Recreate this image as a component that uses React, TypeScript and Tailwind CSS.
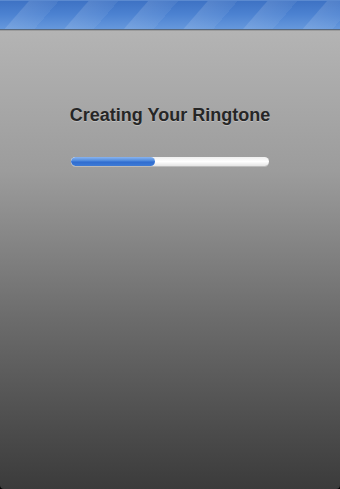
export default function App() {
  return (
    <div className="w-[340px] h-[489px] bg-black overflow-hidden">
      <div className="w-full h-full flex flex-col rounded-b-[4px] overflow-hidden bg-[linear-gradient(to_bottom,#b9b9b9_0%,#9c9c9c_35%,#6c6c6c_65%,#3b3b3b_100%)]">
        {/* striped top bar */}
        <div className="relative h-[29px] shrink-0 bg-[linear-gradient(to_bottom,#3d71c3_0%,#4c82d1_50%,#6698dc_100%)] overflow-hidden">
          <div className="absolute inset-0 bg-[repeating-linear-gradient(131deg,rgba(255,255,255,0)_0px,rgba(255,255,255,0)_22px,rgba(255,255,255,0.12)_23px,rgba(255,255,255,0.06)_45px)]" />
          <div className="absolute top-0 left-0 right-0 h-[1px] bg-[#5b8ad0]" />
        </div>
        <div className="h-[1px] shrink-0 bg-[#56687e]" />
        <div className="h-[1px] shrink-0 bg-[#9c9c9c]" />

        <div className="flex flex-col items-center pt-[73px]">
          <h1 className="font-['Liberation_Sans',Arial,sans-serif] font-bold text-[18px] leading-[22px] text-[#262626] [text-shadow:0_1px_0_rgba(255,255,255,0.3)]">
            Creating Your Ringtone
          </h1>
          <div className="mt-[31px] w-[198px] h-[9px] rounded-full bg-[linear-gradient(to_bottom,#eeeeee,#ffffff_50%,#e4e4e4)] overflow-hidden shadow-[0_1px_0_rgba(255,255,255,0.3)]">
            <div className="h-full w-[84px] rounded-full bg-[linear-gradient(to_bottom,#8ab4ee_0%,#4a86dc_45%,#2f6cd0_55%,#3e7bd6_100%)]" />
          </div>
        </div>
      </div>
    </div>
  );
}
